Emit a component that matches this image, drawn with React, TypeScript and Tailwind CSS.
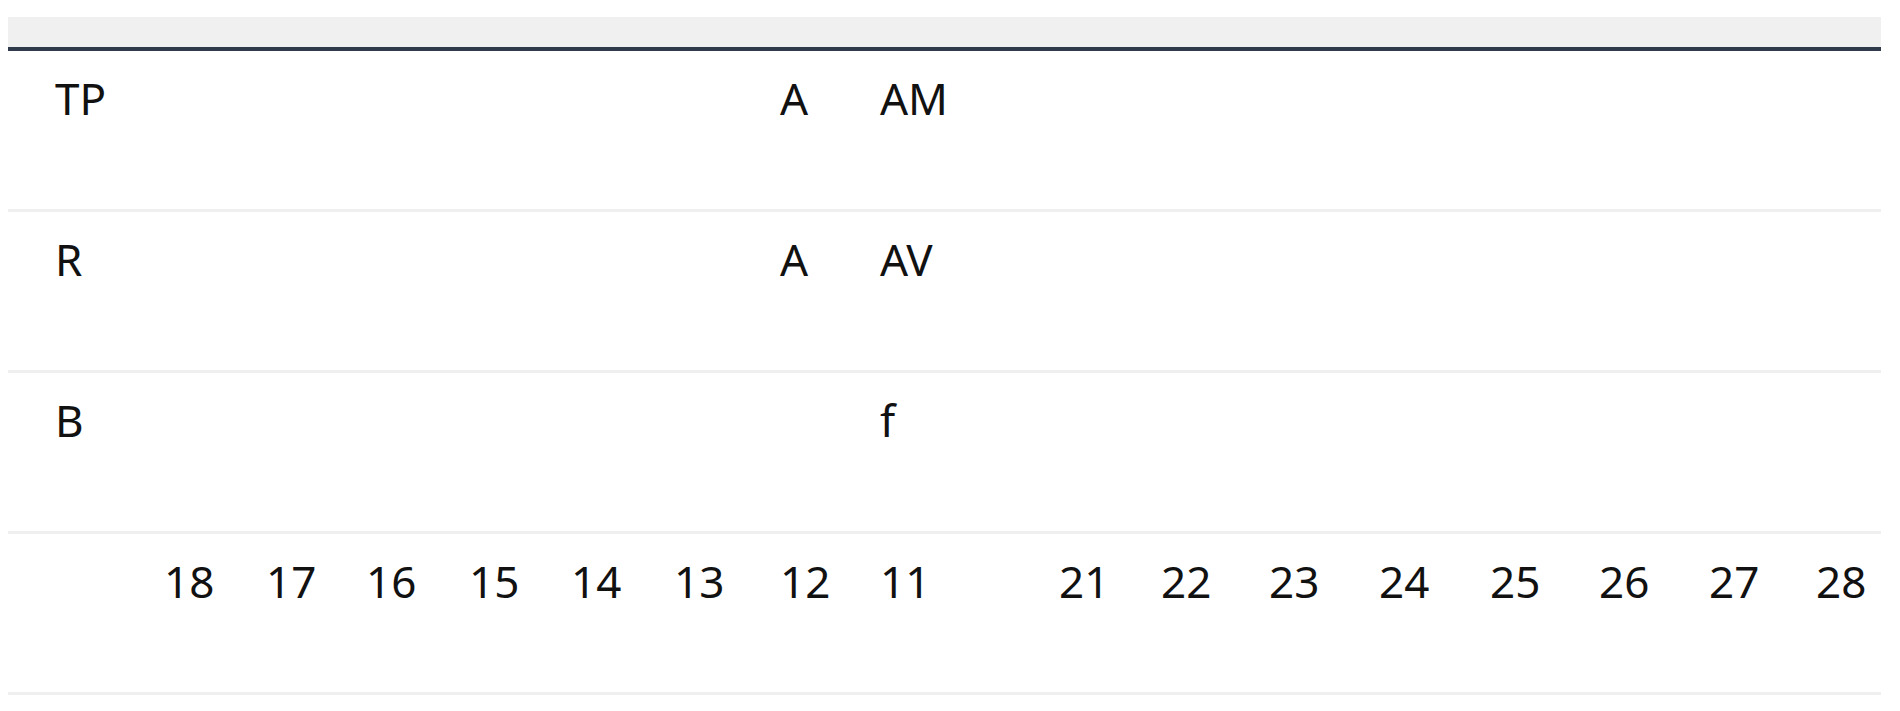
const cols =
  "grid grid-cols-[156px_102px_100px_103px_102px_103px_106px_100px_100px_79px_102px_108px_110px_111px_109px_110px_107px_65px]"

const upper = ["18", "17", "16", "15", "14", "13", "12", "11"]
const lower = ["21", "22", "23", "24", "25", "26", "27", "28"]

type Row = string[]

function blank(): Row {
  return Array.from({ length: 18 }, () => "")
}

const rows: Row[] = (() => {
  const tp = blank()
  tp[0] = "TP"
  tp[7] = "A"
  tp[8] = "AM"
  const r = blank()
  r[0] = "R"
  r[7] = "A"
  r[8] = "AV"
  const b = blank()
  b[0] = "B"
  b[8] = "f"
  const teeth = ["", ...upper, "", ...lower]
  return [tp, r, b, teeth]
})()

export default function App() {
  return (
    <div className="min-h-screen bg-white pt-[17px] pl-[8px] font-['Noto_Sans',sans-serif] text-[#111111]">
      <div className="w-[1873px]">
        {/* header strip */}
        <div className="h-[34px] bg-[#f0f0f0] border-b-4 border-[#2f3a4a]" />

        {rows.map((row, i) => (
          <div key={i} className={`${cols} h-[161px] border-b-[3px] border-[#efefef]`}>
            {row.map((cell, j) => (
              <div key={j} className={`pt-[14px] text-[44px] ${j === 0 ? "pl-[47px]" : ""}`}>
                {cell}
              </div>
            ))}
          </div>
        ))}
      </div>
    </div>
  )
}
